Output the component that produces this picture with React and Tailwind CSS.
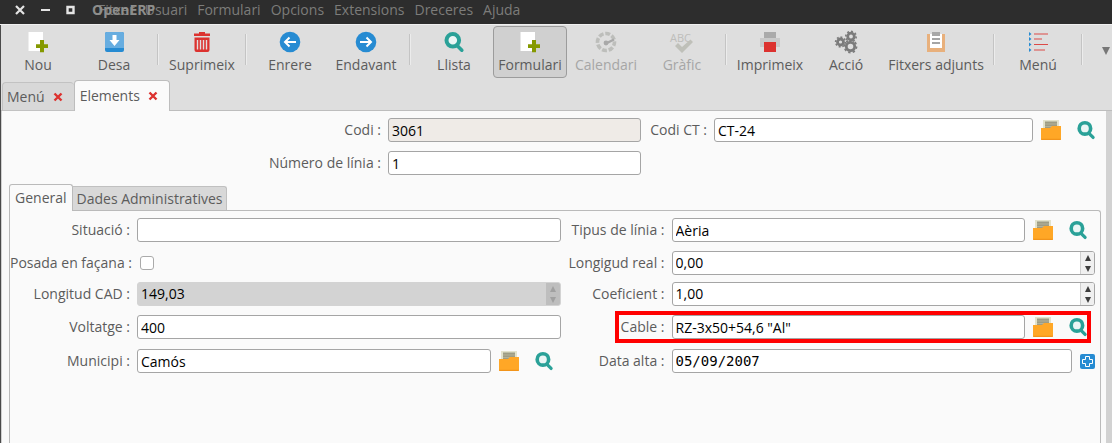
const menus = ["Fitxer", "Usuari", "Formulari", "Opcions", "Extensions", "Dreceres", "Ajuda"];

const NewIcon = () => (
  <svg width="22" height="22" viewBox="0 0 22 22" aria-hidden="true">
    <path d="M1.500 1h14.500v19H1.500z" fill="#fff" />
    <path d="M13 9h4v4.200h4v3.800h-4v4.200h-4V17H9v-3.800h4z" fill="#859900" />
  </svg>
);
const SaveIcon = () => (
  <svg width="22" height="22" viewBox="0 0 22 22" aria-hidden="true">
    <rect x="2" y="1" width="19" height="20" rx="2" fill="#268bd2" />
    <path d="M4 1h15a2 2 0 0 1 2 2v14H2V3a2 2 0 0 1 2-2z" fill="#67ade0" />
    <path d="M9.500 4h4v5h3l-5 6-5-6h3z" fill="#fff" />
  </svg>
);
const TrashIcon = () => (
  <svg width="22" height="22" viewBox="0 0 22 22" aria-hidden="true" fill="#dc322f">
    <path d="M8 1h6v1.500h5V5H3V2.500h5zM3.500 6.500h15V19a2 2 0 0 1-2 2h-11a2 2 0 0 1-2-2z" />
    <path d="M6.500 9v9.500M9.500 9v9.500M12.500 9v9.500M15.500 9v9.500" stroke="#e2dede" strokeWidth="1.400" />
  </svg>
);
const ArrowIcon = ({ right }) => (
  <svg width="22" height="22" viewBox="0 0 22 22" aria-hidden="true">
    <circle cx="11" cy="11" r="10.300" fill="#268bd2" />
    <path
      d={right ? "M5 11h11M11.500 6.500L16 11l-4.500 4.500" : "M17 11H6M10.500 6.500L6 11l4.500 4.500"}
      fill="none"
      stroke="#fff"
      strokeWidth="2"
    />
  </svg>
);
const SearchIcon = ({ size = 22 }) => (
  <svg width={size} height={size} viewBox="0 0 22 22" aria-hidden="true" fill="none" stroke="#2aa198">
    <path d="M14 14.500l4.800 4.700" strokeWidth="3.600" strokeLinecap="round" />
    <circle cx="9.800" cy="9.300" r="6.300" strokeWidth="4" fill="#eaf6f5" />
  </svg>
);
const GaugeIcon = () => (
  <svg width="22" height="22" viewBox="0 0 22 22" aria-hidden="true" fill="none">
    <circle cx="11" cy="11" r="8.500" stroke="#bdbebb" strokeWidth="3.600" strokeDasharray="4.900 1.776" strokeDashoffset="1" />
    <path d="M11 12.500l8-4" stroke="#a9a9a9" strokeWidth="2.400" />
    <circle cx="11" cy="12" r="2.400" fill="#a9a9a9" />
  </svg>
);
const ChartIcon = () => (
  <svg width="26" height="22" viewBox="0 0 26 22" aria-hidden="true">
    <text x="1" y="11" fontSize="11" fontFamily="Open Sans, sans-serif" fill="#bdbdba">ABC</text>
    <path d="M6 15l3-3 4 4 8.500-7.500 2.500 2.500L13 22z" fill="#bfc0b9" />
  </svg>
);
const PrinterIcon = () => (
  <svg width="22" height="22" viewBox="0 0 22 22" aria-hidden="true">
    <path d="M5 1h12v6H5z" fill="#aaa" />
    <path d="M1 7h20v9H1z" fill="#c9c9c9" />
    <path d="M5 11h12v10H5z" fill="#dc322f" />
  </svg>
);
const Gear = ({ x, y, r }) => (
  <g transform={`translate(${x} ${y})`} fill="none" stroke="#7b7b7b">
    <circle r={r} strokeWidth="2.800" />
    <circle r={r + 1.900} pathLength="16" strokeDasharray="1 1" strokeWidth="1.600" />
  </g>
);
const GearsIcon = () => (
  <svg width="24" height="24" viewBox="0 0 24 24" aria-hidden="true">
    <Gear x={6.500} y={12} r={3} />
    <Gear x={17} y={6.500} r={3.300} />
    <Gear x={16.500} y={16.500} r={4.200} />
  </svg>
);
const ClipIcon = () => (
  <svg width="22" height="22" viewBox="0 0 22 22" aria-hidden="true">
    <path d="M2 3h18v18H2z" fill="#e8b07c" />
    <path d="M5 3h12v14H5z" fill="#fff" />
    <path d="M7 1h8v4H7z" fill="#a8a8a8" />
    <path d="M7 8h8M7 12h8" stroke="#888" strokeWidth="1.600" />
  </svg>
);
const ListIcon = () => (
  <svg width="22" height="22" viewBox="0 0 22 22" aria-hidden="true">
    <path d="M2 1l2.500 2L2 5zM2 6l2.500 2L2 10zM2 11.500l2.500 2-2.500 2zM2 17l2.500 2L2 21z" fill="#268bd2" />
    <path d="M7 3h14M7 8h8M7 13.500h14M7 19h11" stroke="#dc4a47" strokeWidth="1.200" />
  </svg>
);
const FolderIcon = () => (
  <svg width="22" height="22" viewBox="0 0 22 22" aria-hidden="true">
    <path d="M3 1h16v10H3z" fill="#e2e2cc" />
    <path d="M5 2.500h12v7H5z" fill="#9d9c84" />
    <path d="M5 5h12M5 7.500h10" stroke="#b9b8a0" strokeWidth="0.800" />
    <path d="M1 9h9l2-2h9v13a1 1 0 0 1-1 1H2a1 1 0 0 1-1-1z" fill="#ffa726" />
    <path d="M1 19.800h20V20a1 1 0 0 1-1 1H2a1 1 0 0 1-1-1z" fill="#f2941a" />
  </svg>
);
const CloseMark = () => (
  <svg width="10" height="10" viewBox="0 0 10 10" aria-hidden="true">
    <path d="M1.500 1.500l7 7M8.500 1.500l-7 7" stroke="#dc322f" strokeWidth="2.400" />
  </svg>
);

const toolbar = [
  { label: "Nou", icon: <NewIcon /> },
  { label: "Desa", icon: <SaveIcon /> },
  null,
  { label: "Suprimeix", icon: <TrashIcon /> },
  null,
  { label: "Enrere", icon: <ArrowIcon /> },
  { label: "Endavant", icon: <ArrowIcon right /> },
  null,
  { label: "Llista", icon: <SearchIcon /> },
  { label: "Formulari", icon: <NewIcon />, active: true },
  { label: "Calendari", icon: <GaugeIcon />, disabled: true },
  { label: "Gràfic", icon: <ChartIcon />, disabled: true },
  null,
  { label: "Imprimeix", icon: <PrinterIcon /> },
  { label: "Acció", icon: <GearsIcon /> },
  { label: "Fitxers adjunts", icon: <ClipIcon />, wide: true },
  null,
  { label: "Menú", icon: <ListIcon /> },
  null,
];

function ToolButton({ label, icon, active, disabled, wide }) {
  return (
    <button
      type="button"
      disabled={disabled}
      aria-pressed={active}
      className={`mx-px flex h-[52px] shrink-0 flex-col items-center rounded-sm border pt-1 ${
        wide ? "w-[102px]" : "w-[74px]"
      } ${active ? "border-[#9c9c9c] bg-[#d0d0d0]" : "border-transparent"} ${
        disabled ? "text-[#a6a6a6]" : "text-[#5c5c5c]"
      }`}
    >
      <span className="flex h-[22px] items-center">{icon}</span>
      <span className="mt-0.5 whitespace-nowrap leading-5">{label}</span>
    </button>
  );
}

const inputClass =
  "h-6 w-full min-w-0 flex-1 rounded-[3px] border border-[#a5a5a5] bg-white px-[3px] text-black outline-none";

function Label({ id, children }) {
  return (
    <label htmlFor={id} className="h-6 whitespace-nowrap pr-[7px] text-right leading-6 text-[#5c5c5c]">
      {children} :
    </label>
  );
}

function Lookup({ id, value }) {
  return (
    <div className="flex h-6 items-center">
      <input id={id} type="text" defaultValue={value} className={inputClass} />
      <button type="button" aria-label="Obre" className="flex w-9 justify-center">
        <FolderIcon />
      </button>
      <button type="button" aria-label="Cerca" className="flex w-[34px] justify-center">
        <SearchIcon size={20} />
      </button>
    </div>
  );
}

function Spin({ id, value, disabled }) {
  return (
    <div
      className={`flex h-6 overflow-hidden rounded-[3px] border ${
        disabled ? "border-[#d3d3d3] bg-[#d3d3d3]" : "border-[#a5a5a5] bg-white"
      }`}
    >
      <input
        id={id}
        type="text"
        defaultValue={value}
        disabled={disabled}
        className="min-w-0 flex-1 bg-transparent px-[3px] text-black outline-none"
      />
      <div
        className={`flex w-[14px] flex-col ${
          disabled ? "bg-[#bebebe] text-[#a0a0a0]" : "border-l border-[#cfcfcf] bg-[#f0f0f0] text-[#3c3c3c]"
        }`}
      >
        <button type="button" disabled={disabled} aria-label="Augmenta" className="flex flex-1 items-center justify-center">
          <svg width="6" height="6" viewBox="0 0 6 6"><path d="M3 0l3 6H0z" fill="currentColor" /></svg>
        </button>
        <button type="button" disabled={disabled} aria-label="Disminueix" className="flex flex-1 items-center justify-center">
          <svg width="6" height="6" viewBox="0 0 6 6"><path d="M3 6l3-6H0z" fill="currentColor" /></svg>
        </button>
      </div>
    </div>
  );
}

export default function App() {
  return (
    <div className="flex min-h-screen flex-col bg-[#dedede] font-['Open_Sans',sans-serif] text-sm">
      <header className="relative flex h-6 items-center bg-[#2d2d2d] pb-1 text-[#7c7c7a]">
        <div className="flex w-[98px] items-center gap-4 pl-[15px]">
          <button type="button" aria-label="Tanca">
            <svg width="10" height="10" viewBox="0 0 10 10"><path d="M1 1l8 8M9 1L1 9" stroke="#e4e4e4" strokeWidth="2.200" /></svg>
          </button>
          <button type="button" aria-label="Minimitza">
            <svg width="9" height="10" viewBox="0 0 9 10"><path d="M0 5h9" stroke="#e4e4e4" strokeWidth="2" /></svg>
          </button>
          <button type="button" aria-label="Maximitza">
            <svg width="9" height="10" viewBox="0 0 9 10"><path d="M1.500 2h6v6h-6z" fill="none" stroke="#e4e4e4" strokeWidth="2.400" /></svg>
          </button>
        </div>
        <nav className="flex gap-2.5 leading-5">
          {menus.map((m) => (
            <button key={m} type="button">{m}</button>
          ))}
        </nav>
        <h1 className="absolute left-[92px] top-0 font-bold leading-5 text-[#8e8e8c]">OpenERP</h1>
      </header>

      <div className="flex h-14 items-start border-t border-[#f0f0f0] pt-px shadow-[inset_1px_0_#4a4a4a]">
        {toolbar.map((t, i) =>
          t ? (
            <ToolButton key={t.label} {...t} />
          ) : (
            <div key={i} className="flex w-3 shrink-0 justify-center pt-2">
              <div className="h-[31px] w-0.5 border-l border-r border-l-[#c4c4c4] border-r-[#ececec]" />
            </div>
          )
        )}
        <button type="button" aria-label="Més" className="ml-auto mt-[21px] pr-0.5">
          <svg width="8" height="8" viewBox="0 0 8 8"><path d="M0 0h8L4 8z" fill="#777" /></svg>
        </button>
      </div>

      <div role="tablist" className="flex h-[31px] items-end border-l border-[#4a4a4a] pl-px text-[#5c5c5c] shadow-[inset_0_-1px_#bdbdbd]">
        <div className="flex h-[29px] items-center gap-2 rounded-t-sm border border-r-0 border-[#c2c2c2] bg-[#d8d8d8] pl-1 pr-[11px]">
          <button type="button" role="tab" aria-selected="false">Menú</button>
          <button type="button" aria-label="Tanca Menú"><CloseMark /></button>
        </div>
        <div className="flex h-[31px] items-center gap-2 rounded-t-sm border border-b-0 border-[#bdbdbd] bg-[#fafafa] pl-[5px] pr-[11px]">
          <button type="button" role="tab" aria-selected="true">Elements</button>
          <button type="button" aria-label="Tanca Elements"><CloseMark /></button>
        </div>
      </div>

      <div className="flex flex-1 border-l border-[#4a4a4a]">
        <main className="flex min-w-0 flex-1 flex-col border-l border-[#d0d0d0] bg-[#fafafa] pt-[7px]">
          <form className="grid grid-cols-[386px_253fr_73px_389fr] gap-y-[9px] pr-[3px]">
            <Label id="codi">Codi</Label>
            <input id="codi" type="text" readOnly defaultValue="3061" className={`${inputClass} bg-[#efebe7]!`} />
            <Label id="ct">Codi CT</Label>
            <Lookup id="ct" value="CT-24" />
            <Label id="num">Número de línia</Label>
            <input id="num" type="text" defaultValue="1" className={inputClass} />
          </form>

          <section className="mt-[9px] flex flex-1 flex-col pl-[7px] pr-[5px] text-[#5c5c5c]">
            <div role="tablist" className="flex items-end">
              <button type="button" role="tab" aria-selected="true" className="relative z-10 -mb-px h-[27px] rounded-t-[3px] border border-b-0 border-[#bababa] bg-[#fafafa] px-[5px]">
                General
              </button>
              <button type="button" role="tab" aria-selected="false" className="h-6 rounded-tr-[3px] border border-b-0 border-l-0 border-[#c0c0c0] bg-[#d8d8d8] px-1">
                Dades Administratives
              </button>
            </div>
            <div className="flex-1 rounded-tr-[3px] border border-b-0 border-[#bababa] pb-4 pr-[5px] pt-[7px]">
              <form className="grid grid-cols-[127px_1fr_111px_1fr] grid-rows-[33px_31px_33px_34px_24px] items-start">
                <Label id="sit">Situació</Label>
                <input id="sit" type="text" defaultValue="" className={inputClass} />
                <Label id="tipus">Tipus de línia</Label>
                <Lookup id="tipus" value="Aèria" />

                <Label id="facana">Posada en façana</Label>
                <div className="flex h-6 items-center pl-[3px]">
                  <input id="facana" type="checkbox" className="size-[14px] appearance-none rounded-[3px] border border-[#aaa] bg-white checked:bg-[#268bd2]" />
                </div>
                <Label id="real">Longigud real</Label>
                <Spin id="real" value="0,00" />

                <Label id="cad">Longitud CAD</Label>
                <Spin id="cad" value="149,03" disabled />
                <Label id="coef">Coeficient</Label>
                <Spin id="coef" value="1,00" />

                <Label id="volt">Voltatge</Label>
                <input id="volt" type="text" defaultValue="400" className={inputClass} />
                <div className="relative col-span-2 grid grid-cols-subgrid">
                  <Label id="cable">Cable</Label>
                  <Lookup id="cable" value={'RZ-3x50+54,6 "Al"'} />
                  <div className="pointer-events-none absolute -bottom-1 -top-1 left-[54px] right-1 border-4 border-[#ff0000]" />
                </div>

                <Label id="mun">Municipi</Label>
                <Lookup id="mun" value="Camós" />
                <Label id="data">Data alta</Label>
                <div className="flex h-6 items-center gap-2">
                  <input id="data" type="text" defaultValue="05/09/2007" className={`${inputClass} font-['DejaVu_Sans_Mono',monospace]`} />
                  <button type="button" aria-label="Calendari">
                    <svg width="15" height="15" viewBox="0 0 15 15">
                      <rect width="15" height="15" rx="2" fill="#268bd2" />
                      <path d="M5.500 2.500h4v3h3v4h-3v3h-4v-3h-3v-4h3z" fill="none" stroke="#fff" />
                    </svg>
                  </button>
                </div>
              </form>
            </div>
          </section>
        </main>
        <div className="w-[6px] bg-[#d2d2d2]" />
      </div>
    </div>
  );
}
